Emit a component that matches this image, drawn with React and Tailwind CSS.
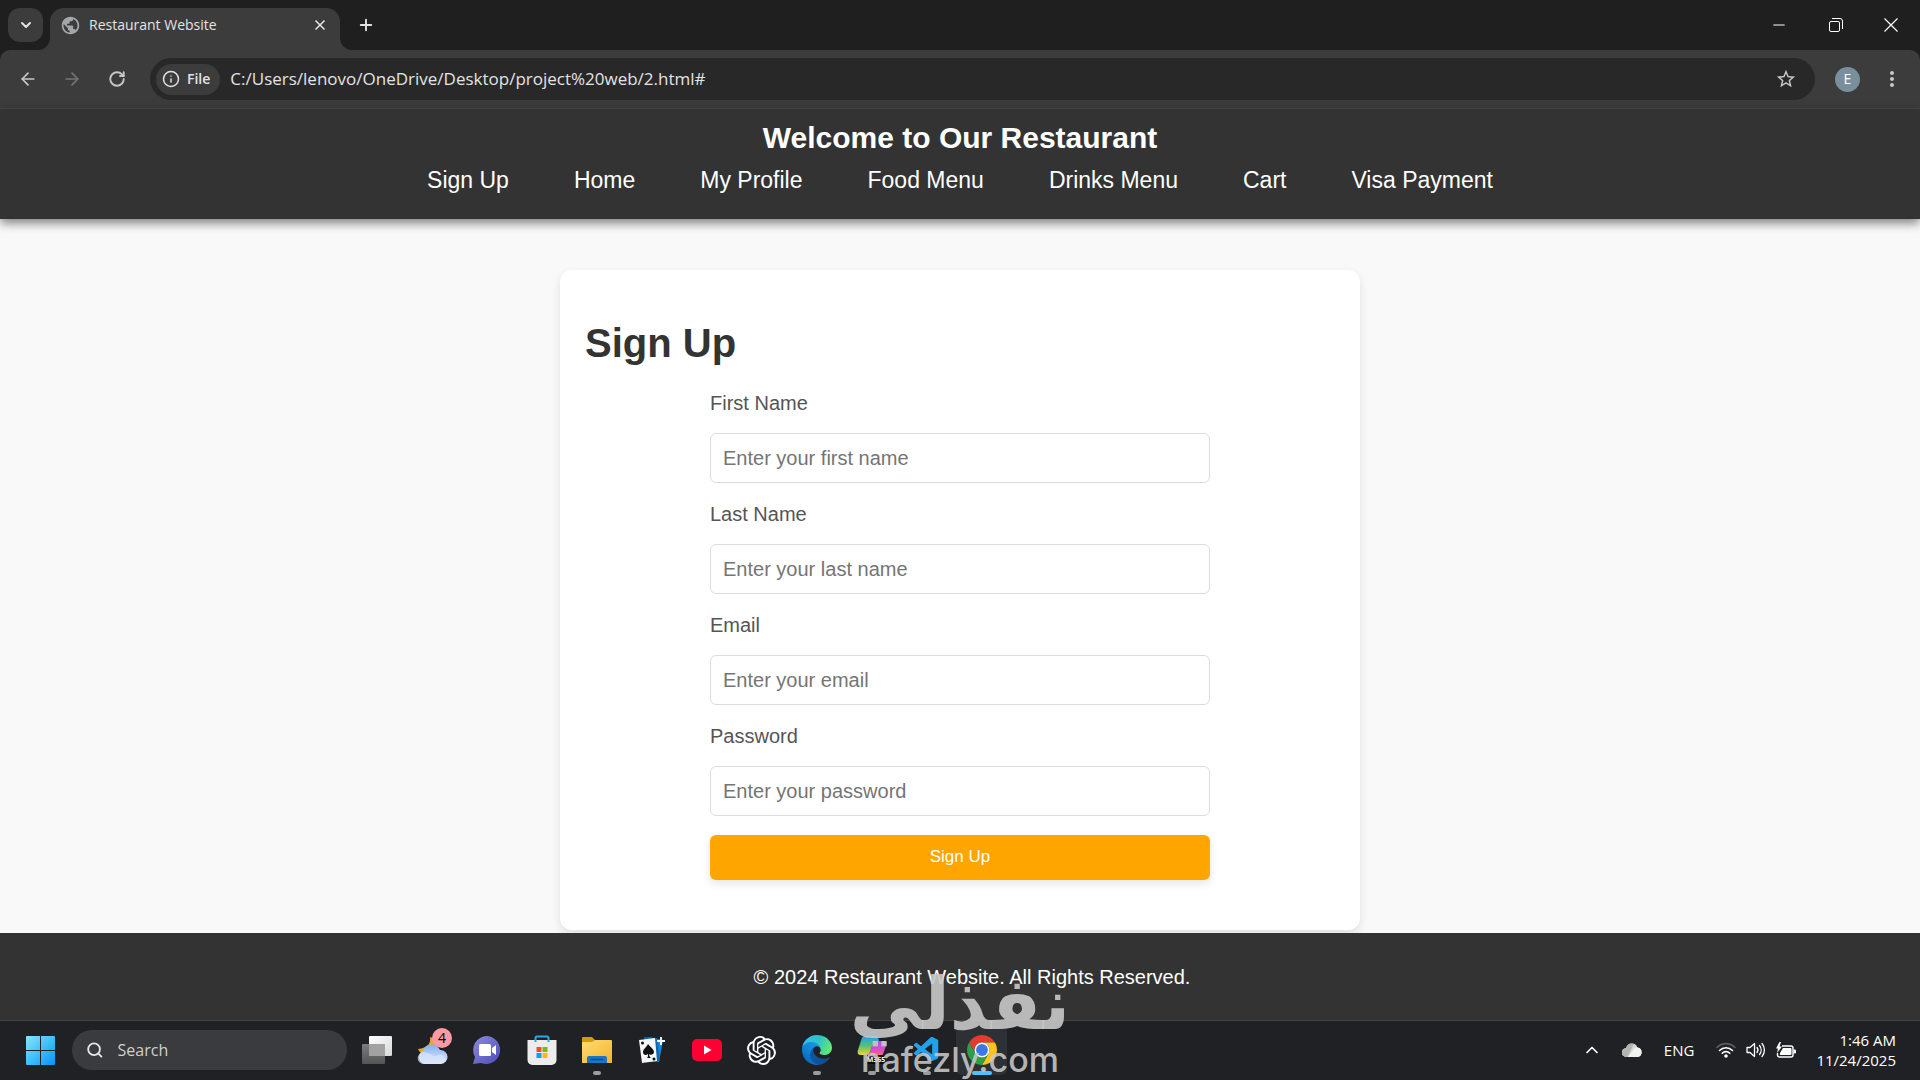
import {
  ArrowLeft,
  ArrowRight,
  ChevronDown,
  ChevronUp,
  Info,
  Minus,
  Plus,
  RotateCw,
  Search,
  X,
} from "lucide-react";
import { MdPublic, MdStarBorder, MdMoreVert } from "react-icons/md";
import { SiOpenai } from "react-icons/si";
import { VscVscode } from "react-icons/vsc";

const navLinks = ["Sign Up", "Home", "My Profile", "Food Menu", "Drinks Menu", "Cart", "Visa Payment"];

const fields = [
  { id: "first-name", label: "First Name", type: "text", placeholder: "Enter your first name" },
  { id: "last-name", label: "Last Name", type: "text", placeholder: "Enter your last name" },
  { id: "email", label: "Email", type: "email", placeholder: "Enter your email" },
  { id: "password", label: "Password", type: "password", placeholder: "Enter your password" },
];

function WindowsLogo() {
  return (
    <svg viewBox="0 0 29 29" className="h-[29px] w-[29px]">
      <defs>
        <linearGradient id="win" x1="0" y1="0" x2="1" y2="1">
          <stop offset="0" stopColor="#8be3fd" />
          <stop offset="0.5" stopColor="#3fc0f8" />
          <stop offset="1" stopColor="#0a93f5" />
        </linearGradient>
      </defs>
      <path
        fill="url(#win)"
        d="M1 0h13v14H0V1a1 1 0 0 1 1-1zM15 0h13a1 1 0 0 1 1 1v13H15zM0 15h14v14H1a1 1 0 0 1-1-1zM15 15h14v13a1 1 0 0 1-1 1H15z"
      />
    </svg>
  );
}

function TaskViewIcon() {
  return (
    <svg viewBox="0 0 30 28" className="h-7 w-[30px]">
      <defs>
        <linearGradient id="tvFront" x1="0" y1="0" x2="1" y2="1">
          <stop offset="0" stopColor="#ffffff" />
          <stop offset="1" stopColor="#d8d8d8" />
        </linearGradient>
        <linearGradient id="tvBack" x1="0" y1="0" x2="0" y2="1">
          <stop offset="0" stopColor="#7b7b7b" />
          <stop offset="1" stopColor="#555555" />
        </linearGradient>
      </defs>
      <rect x="7" y="0" width="23" height="20" rx="1" fill="url(#tvFront)" />
      <rect x="0" y="8" width="23" height="20" rx="1" fill="url(#tvBack)" />
      <rect x="7" y="8" width="16" height="12" fill="#a2a2a2" />
    </svg>
  );
}

function WeatherIcon() {
  return (
    <svg viewBox="0 0 32 30" className="h-[30px] w-8">
      <defs>
        <linearGradient id="cloud" x1="0" y1="0" x2="0" y2="1">
          <stop offset="0" stopColor="#83aef0" />
          <stop offset="1" stopColor="#e3edfb" />
        </linearGradient>
      </defs>
      <path d="M14 2c1 6-2 11-12 12 2 5 8 7 13 5s8-8 5-12c-1-3-3-4-6-5z" fill="#f0a22e" />
      <path
        d="M8 29a7 7 0 0 1-1-13 9 9 0 0 1 17-1 7 7 0 0 1 1 14z"
        fill="url(#cloud)"
      />
      <path d="M8 29a6 6 0 1 1 3-11c3 0 5 3 8 3 2 0 4-2 7-1a5 5 0 0 1-1 9z" fill="#d8e6fa" opacity="0.7" />
    </svg>
  );
}

function ChatIcon() {
  return (
    <svg viewBox="0 0 30 30" className="h-[30px] w-[30px]">
      <defs>
        <linearGradient id="chat" x1="0" y1="0" x2="1" y2="1">
          <stop offset="0" stopColor="#8f8be0" />
          <stop offset="1" stopColor="#4b4cb6" />
        </linearGradient>
      </defs>
      <path d="M15 1a14 14 0 1 1-6 27l-8 1 2-7A14 14 0 0 1 15 1z" fill="url(#chat)" />
      <rect x="7" y="9" width="12" height="12" rx="1.5" fill="#fff" />
      <path d="M20 13l4-3v10l-4-3z" fill="#fff" />
    </svg>
  );
}

function StoreIcon() {
  return (
    <svg viewBox="0 0 30 30" className="h-[30px] w-[30px]">
      <path d="M.5 5h29v20a5 5 0 0 1-5 5h-19a5 5 0 0 1-5-5z" fill="#ececec" />
      <path d="M8.500 7V3a1.500 1.500 0 0 1 1.500-1.500h10A1.500 1.500 0 0 1 21.500 3v4" fill="none" stroke="#2ba7e8" strokeWidth="2" />
      <rect x="9.500" y="12" width="5" height="5" fill="#f25022" />
      <rect x="15.500" y="12" width="5" height="5" fill="#7fba00" />
      <rect x="9.500" y="18" width="5" height="5" fill="#00a4ef" />
      <rect x="15.500" y="18" width="5" height="5" fill="#ffb900" />
    </svg>
  );
}

function FolderIcon() {
  return (
    <svg viewBox="0 0 30 28" className="h-7 w-[30px]">
      <defs>
        <linearGradient id="folder" x1="0" y1="0" x2="1" y2="1">
          <stop offset="0" stopColor="#ffdc74" />
          <stop offset="1" stopColor="#f3b32b" />
        </linearGradient>
      </defs>
      <path d="M0 2a1 1 0 0 1 1-1h9l3 3-3 4H0z" fill="#d9960f" />
      <path d="M0 6h10l3-2h16a1 1 0 0 1 1 1v22H0z" fill="url(#folder)" />
      <path d="M5 27v-5a2 2 0 0 1 2-2h16a2 2 0 0 1 2 2v5z" fill="#1976c5" />
      <path d="M9 23.500h12" stroke="#0c4d8c" strokeWidth="1.500" />
    </svg>
  );
}

function CardsIcon() {
  return (
    <svg viewBox="0 0 28 28" className="h-7 w-7">
      <path d="M10 1l15 3-4 22-9-1z" fill="#1488d8" />
      <path d="M6 1l13 1 3 23-11 1z" fill="#0c66b4" />
      <path d="M1 4l16-2 2 23-15 2z" fill="#f4f8fa" />
      <path
        d="M10 8c-1 3-5 5-5 8s3 4 5 2c0 2 0 3-1 4h4c-1-1-2-2-2-4 2 2 5 0 5-2 0-3-4-5-6-8z"
        fill="#111"
      />
      <circle cx="4.500" cy="7" r="1.500" fill="#111" />
      <circle cx="16" cy="23" r="1.500" fill="#111" />
      <path d="M23 1v8M19 5h8" stroke="#fff" strokeWidth="1.800" />
    </svg>
  );
}

function YoutubeIcon() {
  return (
    <svg viewBox="0 0 30 22" className="h-[22px] w-[30px]">
      <rect width="30" height="22" rx="5" fill="#ff0033" />
      <path d="M12 6.500v9l7.500-4.500z" fill="#fff" />
    </svg>
  );
}

function EdgeIcon() {
  return (
    <svg viewBox="0 0 256 256" className="h-[30px] w-[30px]">
      <defs>
        <linearGradient id="edgeDark" x1="0" y1="0" x2="1" y2="0">
          <stop offset="0" stopColor="#0c59a4" />
          <stop offset="1" stopColor="#114a8b" />
        </linearGradient>
        <linearGradient id="edgeMid" x1="1" y1="0" x2="0.300" y2="1">
          <stop offset="0" stopColor="#1b9de2" />
          <stop offset="0.500" stopColor="#1289dc" />
          <stop offset="1" stopColor="#0567b8" />
        </linearGradient>
        <linearGradient id="edgeTop" x1="0" y1="0.300" x2="1" y2="0.600">
          <stop offset="0" stopColor="#35c1f1" />
          <stop offset="0.500" stopColor="#2cc3c8" />
          <stop offset="1" stopColor="#66eb6e" />
        </linearGradient>
      </defs>
      <path
        fill="url(#edgeDark)"
        d="M231 190.500c-3.400 1.800-6.900 3.400-10.500 4.700a101.700 101.700 0 0 1-35.900 6.500c-47.300 0-88.500-32.500-88.500-74.300 0-11.400 6.400-21.900 16.100-27.300-42.800 1.800-53.800 46.400-53.800 72.500 0 74 68.100 81.400 82.800 81.400 7.900 0 19.800-2.300 27-4.600l1.300-.4a128 128 0 0 0 66.600-52.800 4 4 0 0 0-5.300-5.700z"
      />
      <path
        fill="url(#edgeMid)"
        d="M105.700 241.400a79.200 79.200 0 0 1-22.700-21.300 80.700 80.700 0 0 1 29.500-120c3.100-1.500 8.500-4.100 15.600-4a32.400 32.400 0 0 1 25.700 13 31.900 31.900 0 0 1 6.300 18.700c0-.2 24.500-79.600-80-79.600-43.900 0-80 41.600-80 78.200a130 130 0 0 0 12.100 56 128 128 0 0 0 156.400 67 75.500 75.500 0 0 1-62.800-8z"
      />
      <path
        fill="url(#edgeTop)"
        d="M152.300 148.900c-.9 1-3.400 2.500-3.400 5.600 0 2.600 1.700 5.200 4.800 7.300 14.300 10 41.400 8.600 41.500 8.600 10.700 0 21.100-2.900 30.300-8.300a61.400 61.400 0 0 0 30.400-52.900c.3-22.400-8-37.300-11.300-43.900C223.500 23.900 177.700 0 128 0A128 128 0 0 0 0 126.200c.5-36.500 36.800-66 80-66 3.500 0 23.500.3 42 10.100 16.300 8.600 24.900 18.900 30.800 29.200 6.200 10.700 7.300 24.100 7.300 29.500 0 5.300-2.700 13.300-7.800 19.900z"
      />
    </svg>
  );
}

function CopilotIcon() {
  return (
    <svg viewBox="0 0 30 30" className="h-[30px] w-[30px]">
      <defs>
        <linearGradient id="copLeft" x1="0" y1="0" x2="0" y2="1">
          <stop offset="0" stopColor="#1f9df1" />
          <stop offset="0.500" stopColor="#4fc27a" />
          <stop offset="1" stopColor="#f5d21f" />
        </linearGradient>
        <linearGradient id="copRight" x1="0" y1="0" x2="0" y2="1">
          <stop offset="0" stopColor="#a45cf0" />
          <stop offset="0.600" stopColor="#e04fc0" />
          <stop offset="1" stopColor="#ff7a59" />
        </linearGradient>
      </defs>
      <path d="M8 1h10c2 0 3 1 3.500 3l.5 2h-5l-4 11c-1 2-2 3-4 3H4c-3 0-4-2-3-5L4.500 4C5 2 6 1 8 1z" fill="url(#copLeft)" />
      <path d="M17 6h9c3 0 4 2 3 5l-3 8c-1 3-2 3-4 3H12c-2 0-3-1-3.500-3L8 20c3 0 4-1 5-3z" fill="url(#copRight)" />
      <rect x="10" y="20" width="19" height="9" fill="#0b0b0b" />
      <text x="19" y="27" textAnchor="middle" fontSize="7" fontWeight="700" fontFamily="Open Sans, sans-serif" fill="#fff">
        M365
      </text>
    </svg>
  );
}

function ChromeIcon() {
  return (
    <svg viewBox="0 0 48 48" className="h-[30px] w-[30px]">
      <path d="M3.220 12A24 24 0 0 1 44.780 12H24A12 12 0 0 0 13.610 30z" fill="#e33b2e" />
      <path d="M44.780 12A24 24 0 0 1 24 48L34.390 30A12 12 0 0 0 24 12z" fill="#fcc31e" />
      <path d="M24 48A24 24 0 0 1 3.220 12L13.610 30A12 12 0 0 0 34.390 30z" fill="#2c9f48" />
      <circle cx="24" cy="24" r="12" fill="#fff" />
      <circle cx="24" cy="24" r="9.500" fill="#3b78e7" />
    </svg>
  );
}

function OneDriveIcon() {
  return (
    <svg viewBox="0 0 20 14" className="h-3.5 w-5">
      <path d="M4.500 14A4.500 4.500 0 0 1 4 5a6 6 0 0 1 11.500-.5A4.800 4.800 0 0 1 15.500 14z" fill="#d9d9d9" />
      <path d="M4.500 14A4.500 4.500 0 0 1 4 5a6 6 0 0 1 8-4L5.500 14z" fill="#b4b4b4" />
      <path d="M6 14l6-8c1-1.500 2.500-1.500 3.500-1.500A4.800 4.800 0 0 1 15.500 14z" fill="#f2f2f2" />
    </svg>
  );
}

function WifiIcon() {
  return (
    <svg viewBox="0 0 20 16" className="h-4 w-5" fill="none" strokeWidth="1.600" strokeLinecap="round">
      <path d="M1 5.500a12.500 12.500 0 0 1 18 0" stroke="#5c5c5c" />
      <path d="M3.500 8.500a9 9 0 0 1 13 0" stroke="#fff" />
      <path d="M6.200 11.200a5.300 5.300 0 0 1 7.600 0" stroke="#fff" />
      <circle cx="10" cy="14" r="1.800" fill="#fff" />
    </svg>
  );
}

function VolumeIcon() {
  return (
    <svg viewBox="0 0 20 18" className="h-[18px] w-5" fill="none" stroke="#fff" strokeWidth="1.300" strokeLinejoin="round" strokeLinecap="round">
      <path d="M1 6.500h3L8.500 2.500v13L4 11.500H1z" />
      <path d="M11 6.500a4 4 0 0 1 0 5M13.500 4.500a7 7 0 0 1 0 9M16 2.500a10 10 0 0 1 0 13" />
    </svg>
  );
}

function BatteryIcon() {
  return (
    <svg viewBox="0 0 20 17" className="h-[17px] w-5">
      <path d="M6 4h9a2 2 0 0 1 2 2v7a2 2 0 0 1-2 2H3.500a2 2 0 0 1-2-2v-2" fill="none" stroke="#fff" strokeWidth="1.400" />
      <path d="M7 6h7.500a1 1 0 0 1 1 1v5a1 1 0 0 1-1 1H4v-2z" fill="#fff" />
      <path d="M17.500 7.500h1.500a1 1 0 0 1 1 1v2a1 1 0 0 1-1 1h-1.500z" fill="#fff" />
      <path d="M3.500 0L0 6.500h2L1 11l5-6.500H3.500L5 0z" fill="#fff" />
    </svg>
  );
}

const apps = [
  { name: "Task View", icon: <TaskViewIcon /> },
  { name: "Weather", icon: <WeatherIcon />, badge: "4" },
  { name: "Chat", icon: <ChatIcon /> },
  { name: "Store", icon: <StoreIcon /> },
  { name: "File Explorer", icon: <FolderIcon />, open: true },
  { name: "Solitaire", icon: <CardsIcon /> },
  { name: "YouTube", icon: <YoutubeIcon /> },
  { name: "ChatGPT", icon: <SiOpenai className="h-[29px] w-[29px] text-white" /> },
  { name: "Edge", icon: <EdgeIcon />, open: true },
  { name: "Copilot", icon: <CopilotIcon />, open: true },
  { name: "VS Code", icon: <VscVscode className="h-[30px] w-[30px] text-[#23a0ea]" />, open: true },
  { name: "Chrome", icon: <ChromeIcon />, active: true },
];

function BrowserChrome() {
  return (
    <div className="bg-[#1f1f1f] font-['Open_Sans',sans-serif] text-[#e3e3e3]">
      <div className="flex h-[50px] items-center pl-2">
        <button aria-label="Search tabs" className="flex h-[34px] w-[35px] items-center justify-center rounded-xl bg-[#3c3c3c]">
          <ChevronDown className="h-4 w-4" strokeWidth={3} />
        </button>
        <div className="relative ml-[7px] mt-2 flex h-[42px] w-[290px] items-center rounded-t-[14px] bg-[#3c3c3c] pb-2 pl-2.5 pr-3">
          <svg viewBox="0 0 12 12" className="absolute -left-3 bottom-0 h-3 w-3" fill="#3c3c3c">
            <path d="M12 0A12 12 0 0 1 0 12h12z" />
          </svg>
          <svg viewBox="0 0 12 12" className="absolute -right-3 bottom-0 h-3 w-3" fill="#3c3c3c">
            <path d="M0 0a12 12 0 0 0 12 12H0z" />
          </svg>
          <MdPublic className="h-[21px] w-[21px] text-[#a3a7ab]" />
          <span className="ml-2 flex-1 text-sm">Restaurant Website</span>
          <button aria-label="Close tab">
            <X className="h-4 w-4" strokeWidth={2.500} />
          </button>
        </div>
        <button aria-label="New tab" className="ml-[17px]">
          <Plus className="h-[18px] w-[18px]" strokeWidth={2.500} />
        </button>
        <div className="ml-auto flex items-center gap-[41px] pr-[22px] text-white">
          <button aria-label="Minimize">
            <Minus className="h-[18px] w-[18px]" strokeWidth={1.500} />
          </button>
          <button aria-label="Restore">
            <svg viewBox="0 0 14 14" className="h-3.5 w-3.5" fill="none" stroke="currentColor">
              <rect x="0.500" y="3.500" width="10" height="10" rx="1.500" />
              <path d="M3 .5h8a2.500 2.500 0 0 1 2.500 2.500v8" />
            </svg>
          </button>
          <button aria-label="Close window">
            <svg viewBox="0 0 14 14" className="h-3.5 w-3.5" stroke="currentColor" strokeWidth="1.200">
              <path d="M.5.5l13 13M13.500.5l-13 13" />
            </svg>
          </button>
        </div>
      </div>

      <div className="flex h-[59px] items-center rounded-t-[10px] border-b border-[#474747] bg-[#3c3c3c] pl-[18px] pr-4">
        <button aria-label="Back">
          <ArrowLeft className="h-5 w-5 text-[#c7c7c7]" />
        </button>
        <button aria-label="Forward" className="ml-6">
          <ArrowRight className="h-5 w-5 text-[#757575]" />
        </button>
        <button aria-label="Reload" className="ml-[26px]">
          <RotateCw className="h-[18px] w-[18px] text-[#c7c7c7]" strokeWidth={2.500} />
        </button>
        <div className="ml-6 flex h-[42px] flex-1 items-center rounded-full bg-[#282828] pl-1.5 pr-[18px]">
          <button className="flex h-[31px] items-center gap-[7px] rounded-full bg-[#3c3c3c] pl-1.5 pr-2.5 text-sm font-semibold">
            <Info className="h-[18px] w-[18px]" />
            File
          </button>
          <input
            aria-label="Address"
            defaultValue="C:/Users/lenovo/OneDrive/Desktop/project%20web/2.html#"
            className="ml-2.5 flex-1 bg-transparent text-[17px] outline-none"
          />
          <button aria-label="Bookmark this page">
            <MdStarBorder className="h-[22px] w-[22px] text-[#c7c7c7]" />
          </button>
        </div>
        <button aria-label="Profile" className="ml-5 h-[25px] w-[25px] rounded-full bg-[#78909c] text-sm text-white">
          E
        </button>
        <button aria-label="Menu" className="ml-5">
          <MdMoreVert className="h-6 w-6 text-[#c7c7c7]" />
        </button>
      </div>
    </div>
  );
}

function SignUpCard() {
  return (
    <section className="mx-auto w-full max-w-[800px] rounded-[12px] bg-white px-[25px] pb-[50px] pt-[49px] shadow-[0_4px_10px_rgba(0,0,0,0.1)]">
      <h2 className="text-[40px] font-bold leading-[48px] text-[#333]">Sign Up</h2>
      <form className="mx-auto mt-6 flex w-2/3 flex-col">
        {fields.map((field) => (
          <div key={field.id} className="mb-[19px] flex flex-col gap-[18px]">
            <label htmlFor={field.id} className="text-xl leading-6 text-[#555]">
              {field.label}
            </label>
            <input
              id={field.id}
              type={field.type}
              placeholder={field.placeholder}
              className="h-[50px] rounded-md border border-[#ddd] px-3 text-xl placeholder:text-[#757575]"
            />
          </div>
        ))}
        <button
          type="button"
          className="h-[45px] rounded-md bg-[#ffa500] pb-0.5 text-[17px] text-white shadow-[0_4px_8px_rgba(0,0,0,0.1)]"
        >
          Sign Up
        </button>
      </form>
    </section>
  );
}

function Taskbar() {
  return (
    <div className="relative flex h-[60px] items-center border-t border-[#444] bg-[#1f2125] pb-px pl-[26px] pr-6 font-['Open_Sans',sans-serif] text-white">
      <button aria-label="Start">
        <WindowsLogo />
      </button>
      <label className="ml-[17px] mr-0.5 flex h-10 w-[275px] items-center gap-3.5 rounded-full bg-[#3a3b3f] pl-3.5">
        <Search className="h-5 w-5 text-[#e8e8e8]" strokeWidth={2.500} />
        <input
          aria-label="Search"
          placeholder="Search"
          className="w-full bg-transparent text-base outline-none placeholder:text-[#d0d0d0]"
        />
      </label>
      {apps.map((app) => (
        <button key={app.name} aria-label={app.name} className="relative flex h-[58px] w-[55px] items-center justify-center">
          {app.active && <span className="absolute inset-x-0.5 inset-y-1 rounded-md bg-[#2d3034]" />}
          <span className="relative">{app.icon}</span>
          {app.badge && (
            <span className="absolute right-[7px] top-[7px] h-5 w-5 rounded-full bg-[#ff99a4] text-center text-sm leading-5 text-black">
              {app.badge}
            </span>
          )}
          {app.open && <span className="absolute bottom-1 h-1 w-2 rounded-full bg-[#9a9c9f]" />}
          {app.active && <span className="absolute bottom-1 h-1 w-5 rounded-full bg-[#4cc2ff]" />}
        </button>
      ))}

      <div className="ml-auto flex items-center">
        <button aria-label="Show hidden icons">
          <ChevronUp className="h-5 w-5" />
        </button>
        <span className="ml-5">
          <OneDriveIcon />
        </span>
        <span className="ml-[22px] text-[15px]">ENG</span>
        <div className="ml-[22px] flex items-center gap-2.5">
          <WifiIcon />
          <VolumeIcon />
          <BatteryIcon />
        </div>
        <div className="ml-5 text-right text-[15px] leading-5">
          <div>1:46 AM</div>
          <div>11/24/2025</div>
        </div>
      </div>
    </div>
  );
}

export default function App() {
  return (
    <div className="relative flex min-h-screen flex-col bg-[#f9f9f9] font-['Liberation_Sans',Arial,sans-serif]">
      <BrowserChrome />

      <header className="bg-[#333] pb-[25px] pt-[11px] text-center text-white shadow-[0_4px_10px_rgba(0,0,0,0.5)]">
        <h1 className="text-[30px] font-bold leading-9">Welcome to Our Restaurant</h1>
        <nav className="mt-2.5 flex justify-center gap-[65px] text-[23px] leading-7">
          {navLinks.map((link) => (
            <a key={link} href="#">
              {link}
            </a>
          ))}
        </nav>
      </header>

      <main className="flex-1 pb-[3px] pt-[51px]">
        <SignUpCard />
      </main>

      <footer className="relative bg-[#333] pb-[31px] pl-6 pt-8 text-center text-xl leading-6 text-white">
        © 2024 Restaurant Website. All Rights Reserved.
      </footer>

      <Taskbar />

      {/* Watermark */}
      <div className="pointer-events-none absolute inset-x-0 bottom-0 flex flex-col items-center text-[#c8c8c8]/90">
        <span lang="ar" dir="rtl" className="font-['DejaVu_Sans',sans-serif] text-[72px] font-bold leading-[72px]">
          نفذلي
        </span>
        <span className="font-[Inter,sans-serif] text-[34px] font-medium leading-[40px]">nafezly.com</span>
      </div>
    </div>
  );
}
